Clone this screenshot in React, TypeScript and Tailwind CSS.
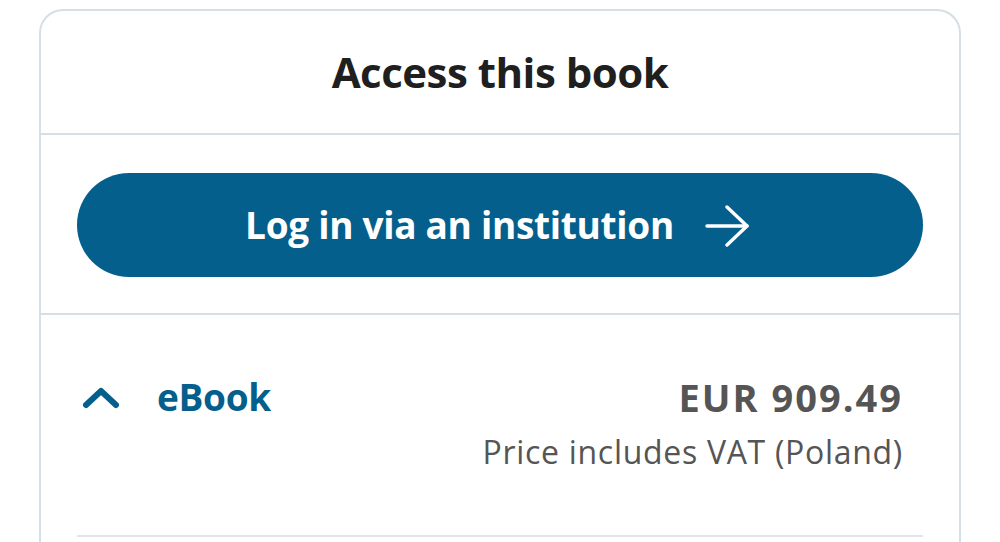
export default function App() {
  return (
    <div
      className="w-[1000px] h-[542px] overflow-hidden bg-white pt-[9px] px-[39px]"
      style={{ fontFamily: '"Open Sans", "Liberation Sans", sans-serif' }}
    >
      <div className="w-[922px] h-[600px] rounded-t-[24px] border-2 border-[#d6dfe5] border-b-0">
        {/* Header */}
        <div className="h-[124px] flex items-center justify-center border-b-2 border-[#d6dfe5]">
          <h2 className="text-[42px] font-bold text-[#1f1f1f] tracking-[-0.5px] pb-[2px]">Access this book</h2>
        </div>

        {/* Institution login */}
        <div className="px-[36px] pt-[38px] pb-[36px] border-b-2 border-[#d6dfe5]">
          <button className="w-full h-[104px] rounded-full bg-[#045f8c] text-white flex items-center justify-center gap-[31px] pr-[6px]">
            <span className="text-[37px] font-bold tracking-[-0.3px]">Log in via an institution</span>
            <svg width="44" height="42" viewBox="0 0 44 42" fill="none" stroke="currentColor" strokeWidth="3.4" strokeLinecap="round" strokeLinejoin="round" className="mt-[2px]">
              <path d="M2 21h40" />
              <path d="M22 2l20 19-20 19" />
            </svg>
          </button>
        </div>

        {/* eBook row */}
        <div className="mx-[36px] pt-[54px] pb-[56px] border-b-2 border-[#dfe5ea] flex items-start justify-between">
          <div className="flex items-center h-[56px] pl-[5px]">
            <svg width="38" height="22" viewBox="0 0 38 22" fill="none" stroke="#045f8c" strokeWidth="6" strokeLinecap="round" strokeLinejoin="round" className="mt-[2px]">
              <path d="M4 18L19 4l15 14" />
            </svg>
            <span className="ml-[37px] text-[37px] font-bold text-[#045f8c] tracking-[-0.3px]">eBook</span>
          </div>
          <div className="flex flex-col items-end pr-[20px]">
            <span className="text-[38px] font-bold text-[#555555] tracking-[2px] leading-[56px]">EUR 909.49</span>
            <span className="text-[32px] text-[#555555] tracking-[0.7px] leading-[54px]">Price includes VAT (Poland)</span>
          </div>
        </div>
      </div>
    </div>
  )
}
